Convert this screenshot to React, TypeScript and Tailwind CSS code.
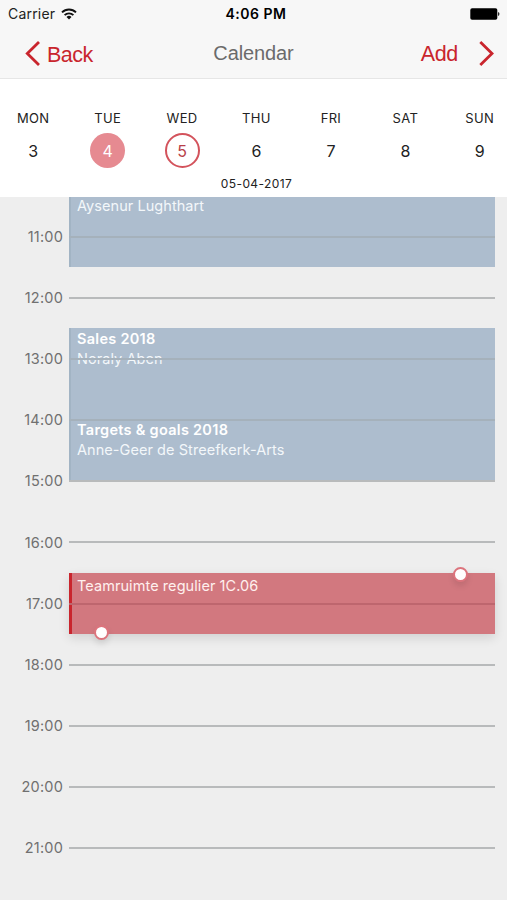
import React from 'react';
import clsx from 'clsx';

const days = [
  { name: 'MON', date: 3 },
  { name: 'TUE', date: 4, today: true },
  { name: 'WED', date: 5, selected: true },
  { name: 'THU', date: 6 },
  { name: 'FRI', date: 7 },
  { name: 'SAT', date: 8 },
  { name: 'SUN', date: 9 },
];

const FIRST_HOUR = 11;
const HOUR_HEIGHT = 61.1;
const FIRST_LINE = 39.8;

const hours = Array.from({ length: 11 }, (_, i) => FIRST_HOUR + i);

const events = [
  { start: 10, end: 11.5, title: '', person: 'Aysenur Lughthart' },
  { start: 12.5, end: 14, title: 'Sales 2018', person: 'Noraly Aben' },
  { start: 14, end: 15.02, title: 'Targets & goals 2018', person: 'Anne-Geer de Streefkerk-Arts' },
];

const offset = (hour: number) => FIRST_LINE + (hour - FIRST_HOUR) * HOUR_HEIGHT;

const lineColor = (hour: number) => {
  if (hour === 17) return 'bg-[#be666e]';
  if (hour === 11 || hour === 13 || hour === 14) return 'bg-[#a5b1bb]';
  return 'bg-[#b8babb]';
};

const StatusBar = () => (
  <div className="grid h-7 grid-cols-3 items-center text-[14px] leading-7 text-[#222]">
    <div className="flex items-center gap-[6px] pl-2">
      <span className="tracking-[0.2px]">Carrier</span>
      <svg width="16" height="12" viewBox="0 0 16 12" fill="none" stroke="#111" strokeWidth="1.9">
        <path d="M1 4.4a10 10 0 0 1 14 0" />
        <path d="M3.6 7.2a6.2 6.2 0 0 1 8.8 0" />
        <path d="M8 11.5 5.5 9a3.6 3.6 0 0 1 5 0z" fill="#111" stroke="none" />
      </svg>
    </div>
    <div className="pl-[5px] text-center font-semibold tracking-[0.5px] text-black">4:06 PM</div>
    <div className="flex justify-end pr-[7px]">
      <svg width="30" height="12" viewBox="0 0 30 12" fill="#000">
        <rect x="0.3" y="0.3" width="27" height="11.4" rx="1.8" />
        <path d="M28.2 4v4c1.6-.6 1.6-3.4 0-4z" />
      </svg>
    </div>
  </div>
);

const NavBar = () => (
  <div className="grid h-[50px] grid-cols-3 items-center font-['Liberation_Sans'] text-[#c9252d]">
    <div className="flex items-center gap-[7px] pl-[25px]">
      <svg width="15" height="25" viewBox="0 0 15 25" fill="none" stroke="currentColor" strokeWidth="2.8">
        <path d="M14 1 2.3 12.5 14 24" />
      </svg>
      <span className="pt-[3px] text-[21.5px] leading-6 tracking-[-0.5px]">Back</span>
    </div>
    <h1 className="text-center text-[20px] leading-6 tracking-[-0.1px] text-[#6b6b6b]">Calendar</h1>
    <div className="flex items-center justify-end gap-[21px] pr-[13px]">
      <span className="pt-[1px] text-[21.5px] leading-6 tracking-[-0.3px]">Add</span>
      <svg width="15" height="25" viewBox="0 0 15 25" fill="none" stroke="currentColor" strokeWidth="2.8">
        <path d="M1.3 1 13 12.5 1.3 24" />
      </svg>
    </div>
  </div>
);

const WeekStrip = () => (
  <div className="h-[118px] overflow-hidden bg-white pt-[29px] text-[#222]">
    <div className="-mr-[10px] -ml-1 grid grid-cols-7">
      {days.map((day) => (
        <div key={day.name} className="flex flex-col items-center">
          <span className="text-[13px] leading-5 tracking-[0.35px]">{day.name}</span>
          <span
            className={clsx(
              'mt-[5px] flex h-[35px] w-[35px] items-center justify-center rounded-full text-[16px]',
              day.today && 'bg-[#e68a91] text-white',
              day.selected && 'border-2 border-[#d3535c] text-[#b83f49]'
            )}
          >
            {day.date}
          </span>
        </div>
      ))}
    </div>
    <div className="mt-[8px] pl-[6px] text-center text-[12px] leading-4 tracking-[0.4px]">05-04-2017</div>
  </div>
);

const Handle = ({ className }: { className: string }) => (
  <span
    className={clsx(
      'absolute h-[15px] w-[15px] rounded-full border-2 border-[#dc747d] bg-white shadow-[0_4px_6px_rgba(0,0,0,0.1)]',
      className
    )}
  />
);

const App = () => {
  return (
    <div className="flex h-[900px] w-[507px] flex-col overflow-hidden bg-[#eeeeee] font-['Inter',sans-serif]">
      <header className="h-[79px] shrink-0 border-b border-[#e6e6e6] bg-[#f7f7f7]">
        <StatusBar />
        <NavBar />
      </header>
      <WeekStrip />

      <main className="relative flex-1 overflow-hidden pt-[9.4px]">
        {events.map((event) => (
          <div
            key={event.person}
            className="absolute right-3 left-[69px] border-l-2 border-[#a2b4c4] bg-[#adbdce] pt-[0.4px] pl-[6px] text-[14.5px] leading-5 text-white"
            style={{ top: offset(event.start), height: (event.end - event.start) * HOUR_HEIGHT }}
          >
            <p className="h-5 font-semibold tracking-[0.28px]">{event.title}</p>
            <p className="tracking-[0.06px] text-[#f3f7fa]">{event.person}</p>
          </div>
        ))}

        <div
          className="absolute right-3 left-[69px] border-l-[3px] border-[#c9252d] bg-[#d2787f] pt-[3px] pl-[5px] text-[14.5px] leading-5 tracking-[0.07px] text-[#fff0ee] shadow-[0_4px_10px_rgba(0,0,0,0.12)]"
          style={{ top: offset(16.5), height: HOUR_HEIGHT }}
        >
          Teamruimte regulier 1C.06
          <Handle className="-top-[6px] right-[27.5px]" />
          <Handle className="-bottom-[6px] left-[22px]" />
        </div>

        {hours.map((hour) => (
          <div key={hour} className="pointer-events-none relative flex h-[61.1px] items-center pr-3">
            <span className="w-[69px] pr-[6px] text-right text-[14.5px] tracking-[0.2px] text-[#707070]">{hour}:00</span>
            <span className={clsx('h-[2px] flex-1', lineColor(hour))} />
          </div>
        ))}
      </main>
    </div>
  );
};

export default App;
